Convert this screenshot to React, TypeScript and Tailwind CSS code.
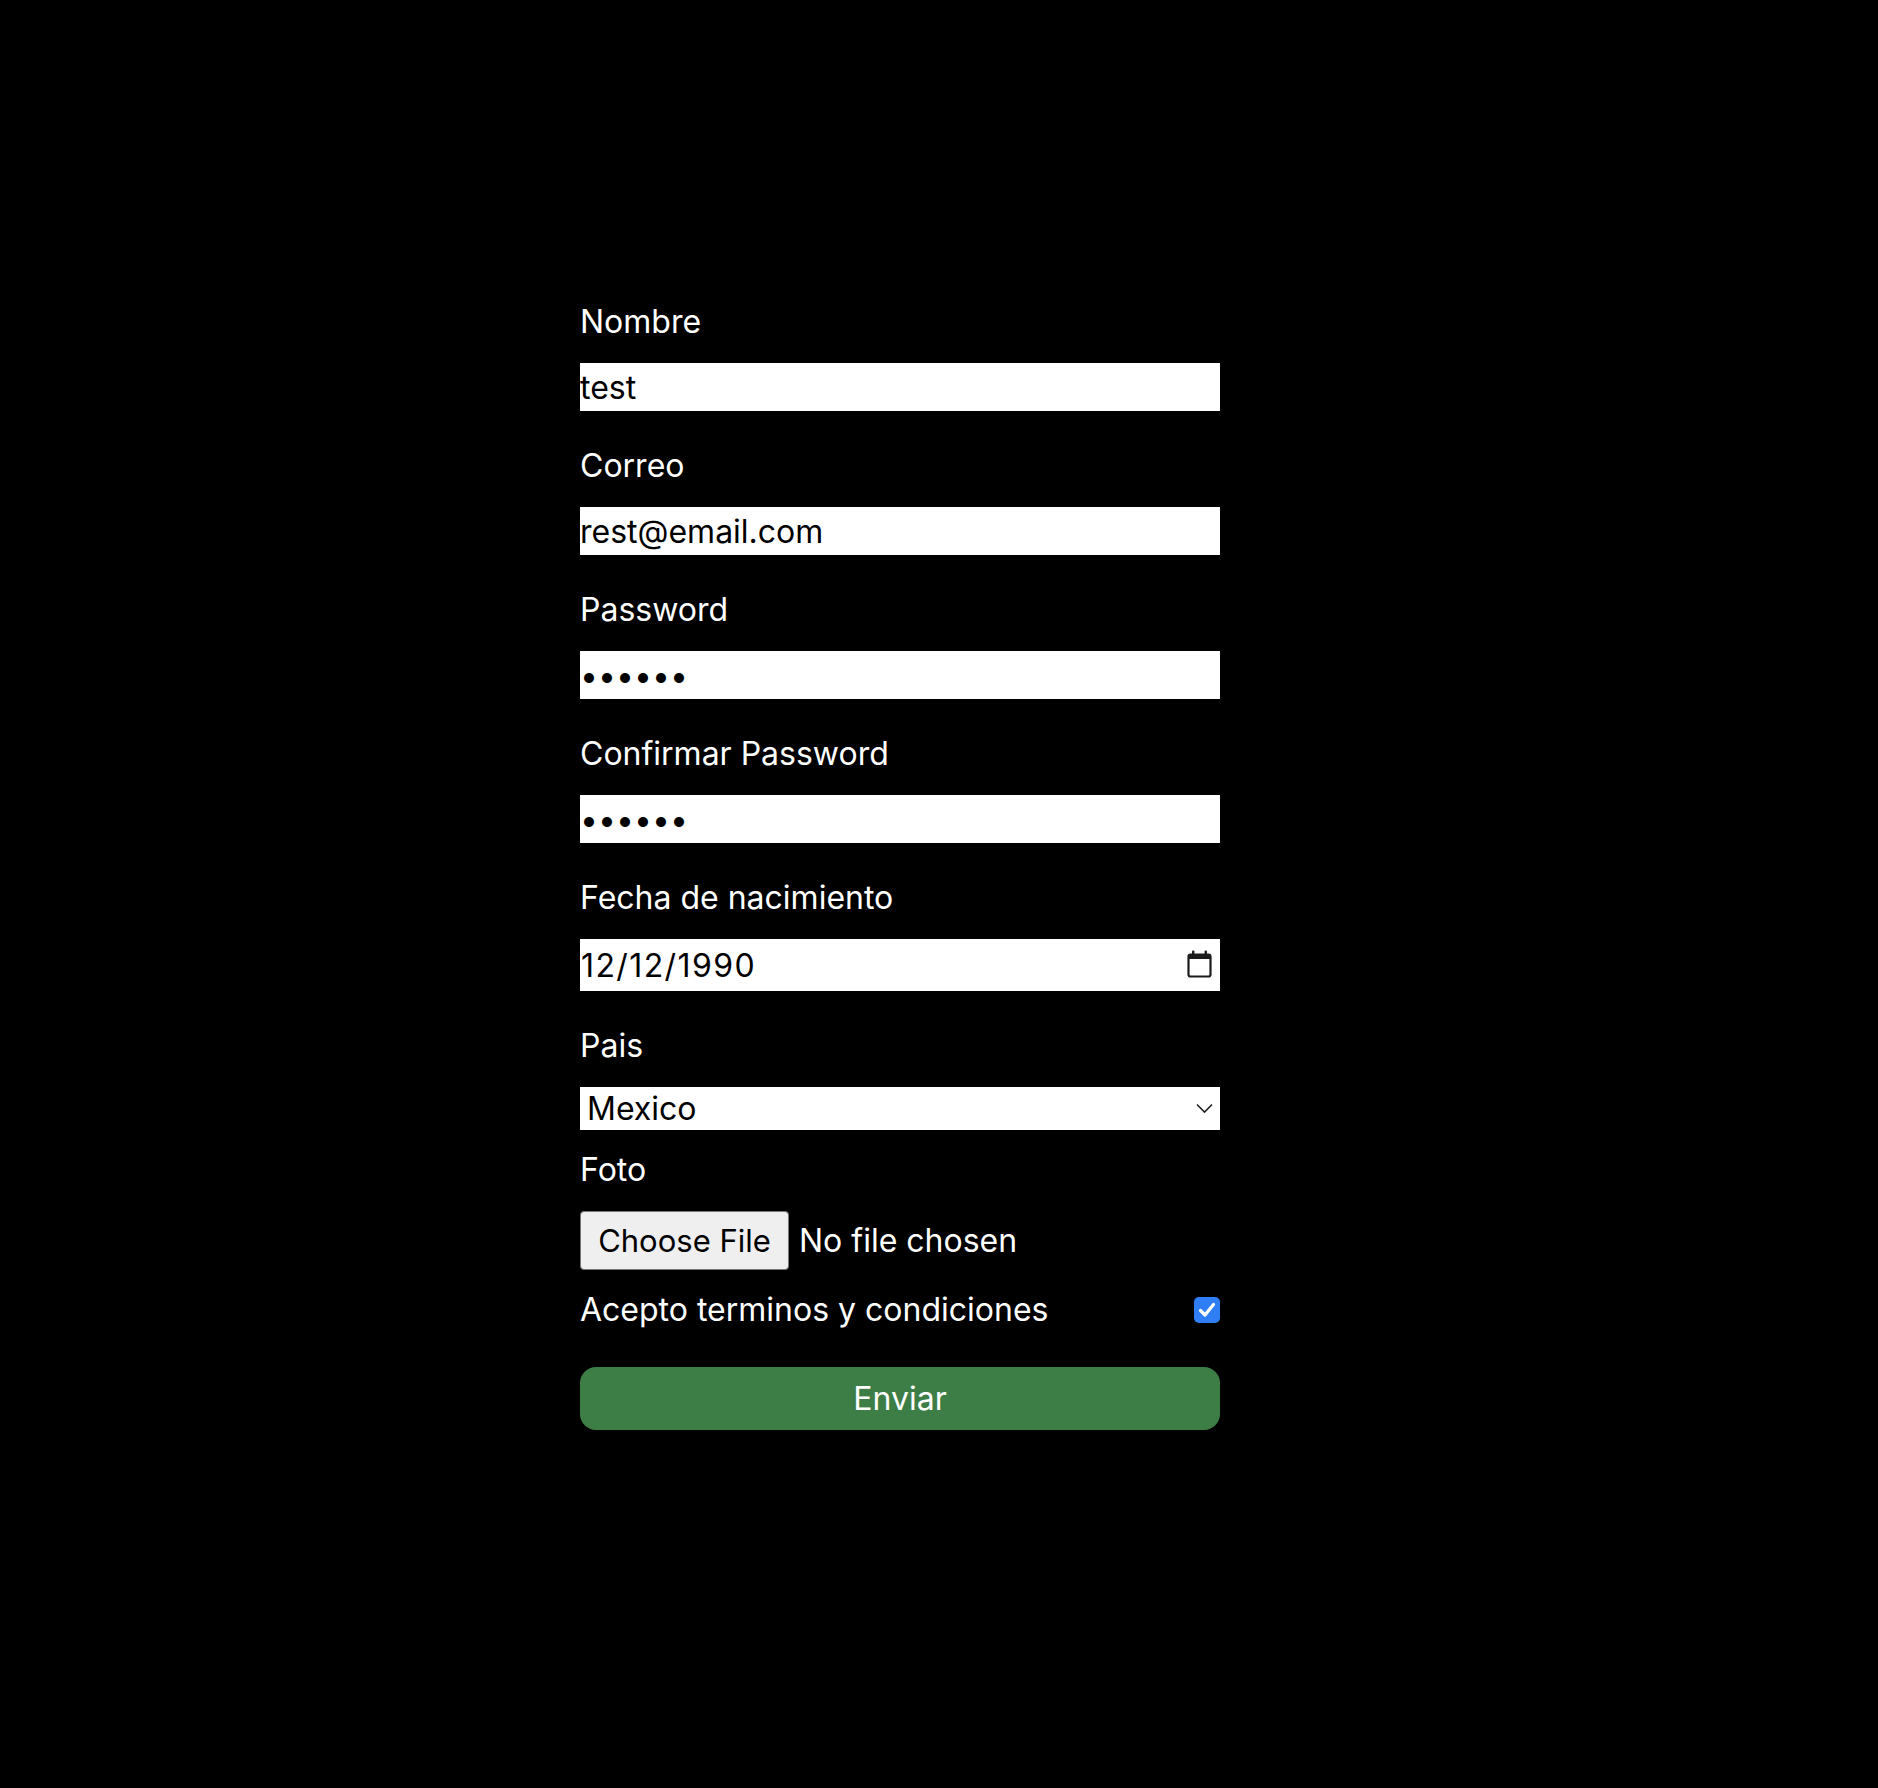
import { useState } from 'react';

const labelCls = 'block text-[32px] leading-[36px] text-white mb-[23px]';
const inputCls = 'block w-full h-[48px] bg-white text-black text-[32px] leading-[36px] outline-none mb-[37px]';

export default function App() {
  const [nombre, setNombre] = useState('test');
  const [correo, setCorreo] = useState('rest@email.com');
  const [pass, setPass] = useState('123456');
  const [pass2, setPass2] = useState('123456');
  const [fecha, setFecha] = useState('12/12/1990');
  const [pais, setPais] = useState('Mexico');
  const [acepto, setAcepto] = useState(true);

  return (
    <div className="min-h-[1788px] bg-black pl-[580px] font-['Inter','Liberation_Sans',sans-serif]">
      <form className="w-[640px] pt-[304px] flex flex-col" onSubmit={(e) => e.preventDefault()}>
        <label className={labelCls}>Nombre</label>
        <input className={inputCls} value={nombre} onChange={(e) => setNombre(e.target.value)} />

        <label className={labelCls}>Correo</label>
        <input className={inputCls} type="email" value={correo} onChange={(e) => setCorreo(e.target.value)} />

        <label className={labelCls}>Password</label>
        <input className={inputCls} type="password" value={pass} onChange={(e) => setPass(e.target.value)} />

        <label className={labelCls}>Confirmar Password</label>
        <input className={inputCls} type="password" value={pass2} onChange={(e) => setPass2(e.target.value)} />

        <label className={labelCls}>Fecha de nacimiento</label>
        <div className="relative mb-[37px]">
          <input
            className="block w-full h-[52px] bg-white text-black text-[32px] leading-[36px] tracking-[1.4px] pl-[1px] outline-none"
            value={fecha}
            onChange={(e) => setFecha(e.target.value)}
          />
          {/* calendar picker icon */}
          <svg className="absolute right-[8px] top-[11px] pointer-events-none" width="25" height="28" viewBox="0 0 25 28" fill="none">
            <rect x="1.5" y="4.5" width="22" height="22" rx="2" stroke="#1c1c1c" strokeWidth="2.2" />
            <rect x="1.5" y="4.5" width="22" height="4.5" fill="#1c1c1c" />
            <rect x="5" y="0.5" width="2.4" height="5" rx="1" fill="#1c1c1c" />
            <rect x="17.6" y="0.5" width="2.4" height="5" rx="1" fill="#1c1c1c" />
          </svg>
        </div>

        <label className={labelCls}>Pais</label>
        <div className="relative mb-[22px]">
          <select
            className="block w-full h-[43px] bg-white text-black text-[32px] leading-[36px] pl-[7px] appearance-none outline-none"
            value={pais}
            onChange={(e) => setPais(e.target.value)}
          >
            <option>Mexico</option>
            <option>Argentina</option>
            <option>Colombia</option>
            <option>España</option>
          </select>
          <svg className="absolute right-[7px] top-[16px] pointer-events-none" width="17" height="11" viewBox="0 0 17 11" fill="none">
            <path d="M1 1.5 L8.5 9 L16 1.5" stroke="#222" strokeWidth="1.6" />
          </svg>
        </div>

        <label className={labelCls}>Foto</label>
        <div className="flex items-center gap-[10px] mb-[22px]">
          <label className="w-[209px] h-[59px] flex items-center justify-center bg-[#efefef] border border-[#767676] rounded-[4px] text-black text-[31px] leading-[36px] cursor-default">
            Choose File
            <input type="file" className="hidden" />
          </label>
          <span className="text-white text-[32px] leading-[36px]">No file chosen</span>
        </div>

        <div className="flex items-center justify-between mb-[39px]">
          <span className="text-white text-[32px] leading-[36px]">Acepto terminos y condiciones</span>
          <button
            type="button"
            onClick={() => setAcepto(!acepto)}
            className={acepto ? 'w-[26px] h-[26px] rounded-[5px] bg-[#2f7ef6] flex items-center justify-center' : 'w-[26px] h-[26px] rounded-[5px] bg-white border border-[#767676]'}
          >
            {acepto && (
              <svg width="18" height="16" viewBox="0 0 18 16" fill="none">
                <path d="M2.5 8.5 L7 13 L15.5 2.5" stroke="white" strokeWidth="3.2" strokeLinecap="round" strokeLinejoin="round" />
              </svg>
            )}
          </button>
        </div>

        <button type="submit" className="h-[63px] w-full rounded-[16px] bg-[#3d7d46] text-white text-[32px] leading-[36px]">
          Enviar
        </button>
      </form>
    </div>
  );
}
